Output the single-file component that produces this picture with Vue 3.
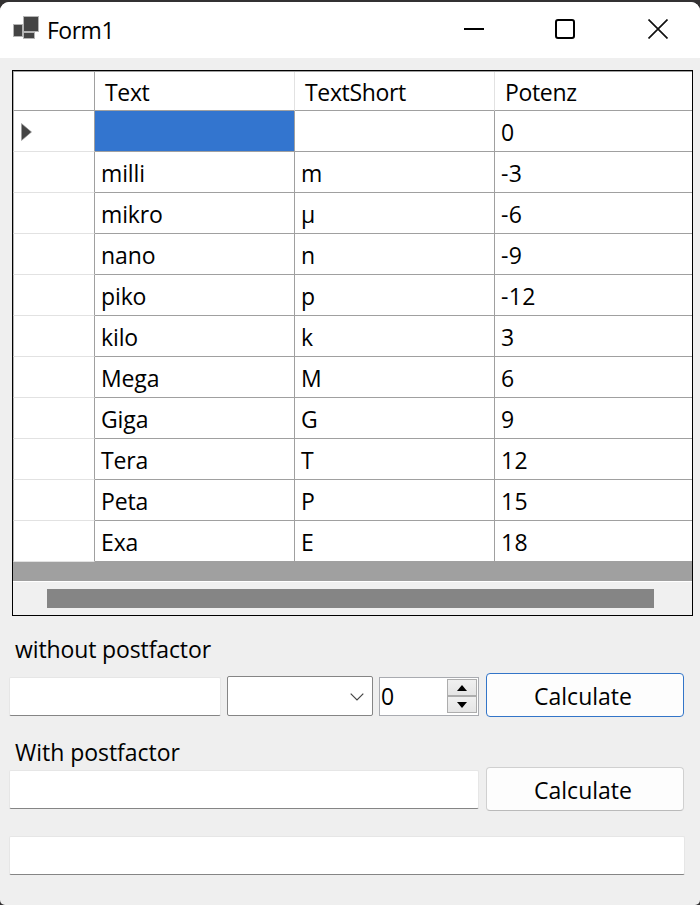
<script setup>
import { ref } from 'vue'

const rows = ref([
  ['', '', '0'],
  ['milli', 'm', '-3'],
  ['mikro', 'µ', '-6'],
  ['nano', 'n', '-9'],
  ['piko', 'p', '-12'],
  ['kilo', 'k', '3'],
  ['Mega', 'M', '6'],
  ['Giga', 'G', '9'],
  ['Tera', 'T', '12'],
  ['Peta', 'P', '15'],
  ['Exa', 'E', '18'],
])
</script>

<template>
  <div class="desktop">
    <div class="window">
      <header class="titlebar">
        <svg class="app-icon" width="26" height="24" viewBox="0 0 26 24">
          <g fill="#444" stroke="#b4b4b4" stroke-width="1">
            <rect x="0.5" y="8.5" width="9" height="12" />
            <rect x="10.5" y="0.5" width="15" height="15" />
            <rect x="10.5" y="16.5" width="11" height="6" />
          </g>
        </svg>
        <span class="title">Form1</span>
        <div class="controls">
          <svg width="20" height="20" viewBox="0 0 20 20"><path d="M0 10H20" stroke="#000" stroke-width="2" /></svg>
          <svg width="20" height="20" viewBox="0 0 20 20"><rect x="1" y="1" width="18" height="18" rx="2" fill="none" stroke="#000" stroke-width="2" /></svg>
          <svg width="20" height="20" viewBox="0 0 20 20"><path d="M0.5 0.5L19.5 19.5M19.5 0.5L0.5 19.5" stroke="#111" stroke-width="1.7" /></svg>
        </div>
      </header>

      <main class="form">
        <section class="grid">
          <div class="row head">
            <div class="cell corner"></div>
            <div class="cell"><span>Text</span></div>
            <div class="cell"><span>TextShort</span></div>
            <div class="cell last"><span>Potenz</span></div>
          </div>
          <div v-for="(r, i) in rows" :key="i" class="row">
            <div class="cell corner">
              <svg v-if="i === 0" class="marker" width="11" height="18" viewBox="0 0 11 18"><path d="M0.5 0.5L10.5 9L0.5 17.5Z" fill="#444" stroke="#999" stroke-width="0.6" /></svg>
            </div>
            <div class="cell" :class="{ selected: i === 0 }"><span>{{ r[0] }}</span></div>
            <div class="cell"><span>{{ r[1] }}</span></div>
            <div class="cell last number"><span>{{ r[2] }}</span></div>
          </div>
          <div class="empty"></div>
          <div class="scrollbar"><div class="thumb"></div></div>
        </section>

        <div class="label first">without postfactor</div>
        <div class="line">
          <div class="textbox short"></div>
          <div class="combo">
            <svg width="14" height="8" viewBox="0 0 14 8"><path d="M0.7 0.7L7 7L13.3 0.7" fill="none" stroke="#444" stroke-width="1.2" /></svg>
          </div>
          <div class="spinner">
            <span class="value">0</span>
            <div class="steps">
              <div class="step"><svg width="10" height="6" viewBox="0 0 10 6"><path d="M5 0L10 6H0Z" /></svg></div>
              <div class="step"><svg width="10" height="6" viewBox="0 0 10 6"><path d="M0 0H10L5 6Z" /></svg></div>
            </div>
          </div>
          <button class="button focused"><span>Calculate</span></button>
        </div>

        <div class="label second">With postfactor</div>
        <div class="line two">
          <div class="textbox medium"></div>
          <button class="button"><span>Calculate</span></button>
        </div>
        <div class="textbox wide"></div>
      </main>
    </div>
  </div>
</template>

<style>
body { margin: 0; }
</style>

<style scoped>
* { box-sizing: border-box; }
svg { display: block; }
.desktop {
  width: 700px;
  height: 905px;
  padding-top: 2px;
  background: #333132;
  overflow: hidden;
  font-family: "Open Sans", "Noto Sans", sans-serif;
  font-size: 23px;
  line-height: 32px;
  letter-spacing: -0.12px;
  color: #000;
}
.window {
  height: 903px;
  border-radius: 9px 9px 5px 5px;
  background: #efefef;
  overflow: hidden;
}
.titlebar {
  height: 56px;
  padding: 0 32px 0 13px;
  display: flex;
  align-items: flex-start;
  background: #fff;
}
.app-icon { margin-top: 14px; }
.title { margin: 12px 0 0 8px; letter-spacing: -0.5px; }
.controls {
  margin: 17px 0 0 auto;
  display: flex;
  gap: 71px;
}
.controls svg:nth-child(3) { margin-left: 2px; }
.form { padding-top: 12px; }
.grid {
  width: 681px;
  height: 546px;
  margin-left: 12px;
  border: 1px solid #000;
  background: #fff;
}
.row {
  display: grid;
  grid-template-columns: 82px 200px 200px 197px;
  height: 41px;
}
.row.head { height: 40px; border-top: 1px solid #a0a0a0; }
.cell {
  border-right: 1px solid #a0a0a0;
  border-bottom: 1px solid #a0a0a0;
  padding: 5px 0 0 6px;
  white-space: nowrap;
}
.cell.last { border-right: 0; }
.cell.number { letter-spacing: 0.4px; }
.head .cell { padding: 4px 0 0 10px; border-right-color: #e2e2e2; letter-spacing: -0.35px; }
.cell.corner {
  padding: 0;
  border-left: 1px solid #b0b0b0;
  border-right-color: #a0a0a0;
  border-bottom-color: #e2e2e2;
}
.head .cell.corner { border-bottom-color: #a0a0a0; border-right-color: #a0a0a0; }
.marker { margin: 12px 0 0 7px; }
.selected { background: #3375cf; }
.empty { height: 19px; background: #a0a0a0; }
.scrollbar {
  height: 34px;
  padding: 7px 38px 0 34px;
  border-top: 1px solid #fff;
  background: #f0f0f0;
}
.thumb {
  height: 19px;
  background: #858585;
}
.label { height: 32px; padding-left: 15px; white-space: nowrap; }
.label.first { margin-top: 17px; }
.label.second { margin-top: 19px; letter-spacing: -0.03px; }
.line {
  display: flex;
  margin-top: 8px;
  padding-left: 9px;
}
.line.two { margin-top: -1px; }
.textbox {
  height: 39px;
  border: 1px solid #e6e6e6;
  border-bottom-color: #858585;
  border-radius: 2px;
  background: #fff;
}
.short { width: 212px; margin-top: 4px; }
.medium { width: 470px; margin-top: 3px; }
.wide { width: 676px; margin: 25px 0 0 9px; }
.combo {
  display: flex;
  align-items: center;
  justify-content: flex-end;
  width: 146px;
  height: 40px;
  margin: 3px 0 0 6px;
  padding: 1px 8px 0 0;
  border: 1px solid #858585;
  border-radius: 2px;
  background: #fff;
}
.spinner {
  display: flex;
  justify-content: space-between;
  width: 100px;
  height: 39px;
  margin: 4px 0 0 6px;
  padding: 1px;
  border: 1px solid #a9abb0;
  background: #fff;
}
.value { margin: 1px 0 0 0; }
.steps {
  display: flex;
  flex-direction: column;
  width: 30px;
  margin-bottom: 1px;
}
.step {
  flex: 1;
  display: flex;
  align-items: center;
  justify-content: center;
  border: 1px solid #adadad;
  background: linear-gradient(#f0f0f0, #e5e5e5);
}
.button {
  width: 198px;
  height: 44px;
  margin: 0 0 0 7px;
  padding: 2px 4px 0 0;
  border: 1px solid #d0d0d0;
  border-bottom-color: #bababa;
  border-radius: 4px;
  background: #fdfdfd;
  font: inherit;
  letter-spacing: 0;
  color: inherit;
}
.button.focused { border-color: #3375c8; }
</style>
